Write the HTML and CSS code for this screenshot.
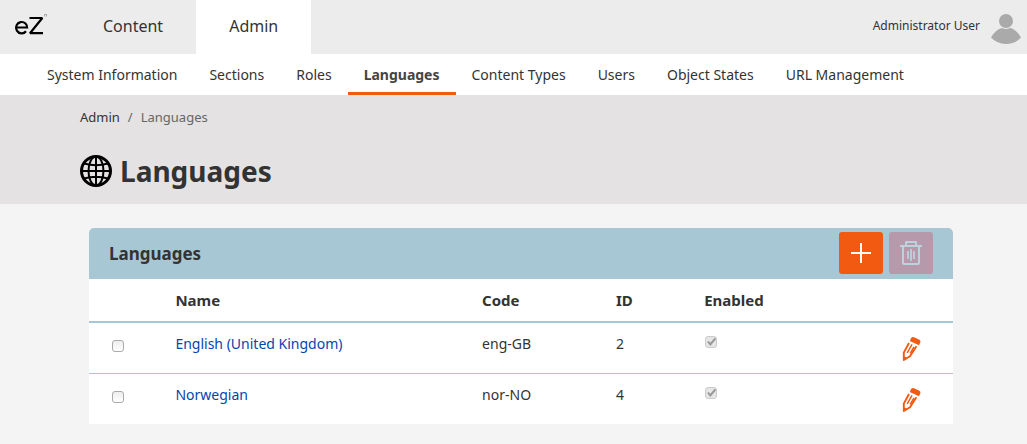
FILE: index.html
```html
<!DOCTYPE html>
<html lang="en">
<head>
<meta charset="utf-8">
<title>Languages</title>
<link rel="stylesheet" href="styles.css">
</head>
<body>
<svg class="sprite" aria-hidden="true">
  <symbol id="pencil" viewBox="0 0 20 26">
    <g fill="none" stroke="#f15a10" stroke-linejoin="round">
      <path d="M9 2.300Q10 0.500 12 1.200L17.400 3.800Q19 4.700 18.300 6.500L17 9.200L7.800 5Z" fill="#f15a10" stroke="none"/>
      <path d="M7 7L1.800 16.600V24L8 20.200L14.400 10.300" stroke-width="1.900"/>
      <path d="M10 8.400L5.200 17M12 11L8.200 17.300" stroke-width="1.500"/>
      <path d="M2 21L4.600 22L2 24Z" fill="#f15a10" stroke-width="1"/>
    </g>
  </symbol>
</svg>
<header class="topbar">
  <a class="logo" href="#" aria-label="eZ">
    <svg width="34" height="26" viewBox="0 0 34 26" fill="none" stroke="#000" stroke-width="2.200">
      <path d="M2 14.500H13M13.200 15.500A5.600 5.700 0 1 0 12 18.300"/>
      <path d="M15.500 5H28.300L16 20.200H29" stroke-linejoin="bevel"/>
      <path d="M30 1.500H33M30.500 1.500V3.500M32.500 1.500V3.500" stroke="#aaa" stroke-width="1"/>
    </svg>
  </a>
  <nav class="tabs">
    <a href="#">Content</a>
    <a class="active" href="#">Admin</a>
  </nav>
  <a class="user" href="#">
    <span>Administrator User</span>
    <svg width="30" height="30" viewBox="0 0 30 30" fill="#aaa"><circle cx="15" cy="7" r="7"/><path d="M0 23.500Q5 15 11 14Q15 16 19 14Q25 15 30 23.500Q24 30 15 30T0 23.500Z"/></svg>
  </a>
</header>
<nav class="subnav">
  <a href="#">System Information</a>
  <a href="#">Sections</a>
  <a href="#">Roles</a>
  <a class="active" href="#">Languages</a>
  <a href="#">Content Types</a>
  <a href="#">Users</a>
  <a href="#">Object States</a>
  <a href="#">URL Management</a>
</nav>
<section class="page-head">
  <div class="breadcrumb"><a href="#">Admin</a><span>/</span><span>Languages</span></div>
  <h1>
    <svg width="32" height="32" viewBox="0 0 32 32" fill="none" stroke="#000" stroke-width="2"><circle cx="16" cy="16" r="14.500" stroke-width="3"/><ellipse cx="16" cy="16" rx="7.500" ry="14.500"/><path d="M16 1V31M1 16H31M4 8.500Q16 12 28 8.500M4 23.500Q16 20 28 23.500"/></svg>
    <span>Languages</span>
  </h1>
</section>
<main class="panel">
  <div class="panel-head">
    <h2>Languages</h2>
    <button class="btn" type="button" aria-label="Add language">
      <svg width="20" height="20" viewBox="0 0 20 20" stroke="#fff" stroke-width="2"><path d="M10 0V20M0 10H20"/></svg>
    </button>
    <button class="btn" type="button" aria-label="Delete languages" disabled>
      <svg width="22" height="24" viewBox="0 0 22 24" fill="none" stroke="#bcd2dd" stroke-width="2"><path d="M0 5H22M6 5V1H16V5" stroke-linejoin="round"/><path d="M3 5V22Q3 23 4 23H18Q19 23 19 22V5"/><path d="M8 10V18M11 8V20M14 10V18" stroke-width="1.800"/></svg>
    </button>
  </div>
  <table>
    <colgroup><col class="c-select"><col class="c-name"><col class="c-code"><col class="c-id"><col class="c-enabled"><col></colgroup>
    <thead>
      <tr><th></th><th>Name</th><th>Code</th><th>ID</th><th>Enabled</th><th></th></tr>
    </thead>
    <tbody>
      <tr>
        <td class="select"><input type="checkbox" aria-label="Select English (United Kingdom)"></td>
        <td><a href="#">English (United Kingdom)</a></td><td>eng-GB</td><td>2</td>
        <td class="enabled"><input type="checkbox" aria-label="English (United Kingdom) enabled" checked disabled></td>
        <td class="edit"><a href="#" aria-label="Edit English (United Kingdom)"><svg width="20" height="26"><use href="#pencil"/></svg></a></td>
      </tr>
      <tr>
        <td class="select"><input type="checkbox" aria-label="Select Norwegian"></td>
        <td><a href="#">Norwegian</a></td><td>nor-NO</td><td>4</td>
        <td class="enabled"><input type="checkbox" aria-label="Norwegian enabled" checked disabled></td>
        <td class="edit"><a href="#" aria-label="Edit Norwegian"><svg width="20" height="26"><use href="#pencil"/></svg></a></td>
      </tr>
    </tbody>
  </table>
</main>
</body>
</html>
```
FILE: styles.css
```css
* { box-sizing: border-box; }
body {
  margin: 0;
  background: #f4f4f4;
  color: #333;
  font: 14px/20px "Noto Sans", sans-serif;
}
a { color: inherit; text-decoration: none; }
svg { display: block; }
.sprite { display: none; }

.topbar { display: flex; background: #ececec; height: 54px; }
.logo { width: 70px; padding: 13px 0 0 14px; }
.tabs { display: flex; flex: 1; font-size: 16px; line-height: 52px; }
.tabs a { padding: 0 33px; }
.tabs .active { background: #fff; }
.user { display: flex; align-items: center; gap: 11px; padding: 4px 6px 0 0; font-size: 12px; line-height: 16px; }
.user span { padding-bottom: 6px; }

.subnav { display: flex; padding-left: 31px; background: #fff; }
.subnav a { padding: 11px 16px 7px; border-bottom: 3px solid transparent; white-space: nowrap; }
.subnav .active { border-color: #f15a10; font-weight: 700; color: #444; }

.page-head { padding: 12px 80px 14px; background: #e4e2e2; }
.breadcrumb { display: flex; gap: 8px; font-size: 13px; line-height: 20px; color: #666; }
.breadcrumb a { color: #333; }
h1 { display: flex; align-items: center; gap: 8px; margin: 25px 0 0; font-size: 28px; line-height: 38px; }

.panel { margin: 24px 74px 20px 89px; background: #fff; border-radius: 5px 5px 0 0; }
.panel-head {
  display: flex;
  align-items: center;
  gap: 6px;
  padding: 4px 20px 5px;
  background: #a7c7d4;
  border-radius: 5px 5px 0 0;
}
h2 { flex: 1; margin: 0; padding-top: 2px; font-size: 17px; line-height: 24px; }
.btn {
  display: grid;
  place-items: center;
  width: 44px;
  height: 42px;
  padding: 0;
  border: 0;
  border-radius: 3px;
  background: #f15a10;
}
.btn:disabled { background: #b699aa; }

table { width: 100%; table-layout: fixed; border-collapse: separate; border-spacing: 0; }
.c-select { width: 10%; }
.c-name { width: 35.5%; }
.c-code { width: 15.5%; }
.c-id { width: 10.2%; }
.c-enabled { width: 22.9%; }
th { padding: 11px 0; border-bottom: 2px solid #a7c7d4; text-align: left; font-size: 15px; }
td { height: 51px; padding: 11px 0 0; vertical-align: top; border-bottom: 1px solid #a7c7d4; }
tbody tr:last-child td { height: 50px; border-bottom: 0; }
td a { color: #0645ad; }
.select { padding: 17px 0 0 23px; }
.enabled { padding-top: 13px; }
.edit { padding-top: 13px; }
input {
  display: block;
  appearance: none;
  width: 12px;
  height: 12px;
  margin: 0;
  border: 1px solid #aaa;
  border-radius: 3px;
  background: linear-gradient(#eee, #fff);
}
.enabled input { margin-left: 1px; }
input:disabled { border-color: #ccc; background: #e6e6e6; }
input:disabled::before {
  content: "";
  display: block;
  width: 10px;
  height: 10px;
  background: #999;
  clip-path: polygon(10% 50%, 25% 40%, 42% 58%, 85% 8%, 100% 20%, 42% 90%);
}
```
